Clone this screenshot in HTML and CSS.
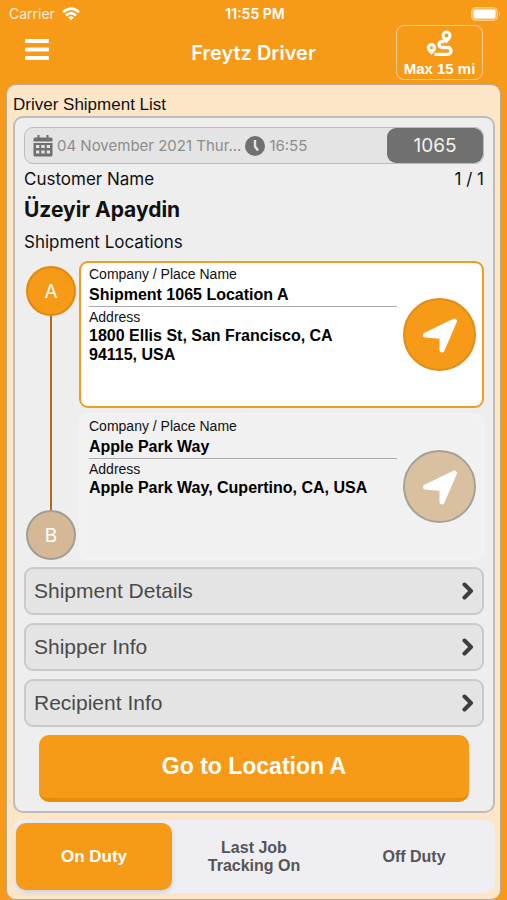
FILE: index.html
```html
<!DOCTYPE html>
<html lang="en">
<head>
<meta charset="utf-8">
<meta name="viewport" content="width=device-width, initial-scale=1">
<title>Freytz Driver</title>
<link rel="stylesheet" href="styles.css">
</head>
<body>
<div class="status-bar">
  <div class="carrier">
    <span>Carrier</span>
    <svg width="18" height="14" viewBox="0 0 18 14" aria-hidden="true"><g fill="none" stroke="#fff" stroke-width="2.6"><path d="M1 5.2Q9-2 17 5.2"/><path d="M4 8.5Q9 3.9 14 8.500"/></g><path d="M6.2 10.5Q9 8 11.8 10.5L9 13.5Z" fill="#fff"/></svg>
  </div>
  <span class="clock">11:55 PM</span>
  <svg class="battery" width="30" height="14" viewBox="0 0 30 14" aria-hidden="true"><rect x=".5" y=".5" width="26" height="13" rx="4" fill="#f9b95c" stroke="#fbcb85"/><rect x="2.5" y="2.5" width="22" height="9" rx="2" fill="#fff"/><path d="M28 4.5Q30 7 28 9.5Z" fill="#fbcb85"/></svg>
</div>

<header class="header">
  <button class="menu" aria-label="Menu"><svg width="24" height="22" viewBox="0 0 24 22"><g fill="#fff"><rect width="24" height="4" rx="1"/><rect y="8.5" width="24" height="4" rx="1"/><rect y="17" width="24" height="4" rx="1"/></g></svg></button>
  <h1 class="title">Freytz Driver</h1>
  <button class="range">
    <svg width="28" height="28" viewBox="0 0 28 28" aria-hidden="true"><path d="M18.500 11.500H16a3 3 0 0 0 0 6h5.700a3.400 3.400 0 0 1 0 6.800H8.500" fill="none" stroke="#fff" stroke-width="3.300"/><path fill="#fff" fill-rule="evenodd" d="M20.500 0.500a5 5 0 0 1 5 5c0 3-3 5.500-5 8-2-2.500-5-5-5-8a5 5 0 0 1 5-5zm0 3.100a1.900 1.900 0 1 0 0 3.800 1.900 1.900 0 0 0 0-3.800zM5.500 13a4.800 4.800 0 0 1 4.800 4.800c0 2.800-3 5-4.800 7.200-1.800-2.200-4.800-4.400-4.800-7.200A4.800 4.800 0 0 1 5.500 13zm0 3.200a1.500 1.500 0 1 0 0 3 1.500 1.500 0 0 0 0-3z"/></svg>
    <span>Max 15 mi</span>
  </button>
</header>

<main class="panel">
  <h2 class="panel-title">Driver Shipment List</h2>

  <section class="shipment">
    <div class="date-bar">
      <svg class="calendar" width="20" height="22" viewBox="0 0 20 22" aria-hidden="true"><path fill="#707070" fill-rule="evenodd" d="M4.500 0h2v2.500h7V0h2v2.500H18a1.500 1.500 0 0 1 1.500 1.500v2.500H.5V4A1.500 1.500 0 0 1 2 2.500h2.500zM.5 8h19v12a1.500 1.500 0 0 1-1.500 1.500H2A1.500 1.500 0 0 1 .5 20zM3 10v3h3.300v-3zm5.300 0v3h3.400v-3zm5.400 0v3H17v-3zM3 15.500v3h3.300v-3zm5.300 0v3h3.400v-3zm5.400 0v3H17v-3z"/></svg>
      <span class="date">04 November 2021 Thur...</span>
      <svg width="20" height="20" viewBox="0 0 20 20" aria-hidden="true"><circle cx="10" cy="10" r="10" fill="#707070"/><path d="M10 4v6.500l3 4" fill="none" stroke="#e4e4e4" stroke-width="2.400"/></svg>
      <span class="time">16:55</span>
      <span class="number">1065</span>
    </div>

    <div class="customer-row"><span>Customer Name</span><span>1 / 1</span></div>
    <h3 class="customer">Üzeyir Apaydin</h3>
    <div class="locations-title">Shipment Locations</div>

    <div class="route">
      <div class="track">
        <span class="stop stop-active">A</span>
        <span class="line"></span>
        <span class="stop">B</span>
      </div>
      <div class="places">
        <article class="place place-active">
          <div class="place-text">
            <div class="label">Company / Place Name</div>
            <div class="value company">Shipment 1065 Location A</div>
            <div class="label">Address</div>
            <div class="value">1800 Ellis St, San Francisco, CA<br>94115, USA</div>
          </div>
          <button class="navigate" aria-label="Navigate to location A"><svg width="36" height="36" viewBox="0 0 36 36"><path d="M3.500 18L32.500 4L20 33V19.500Z" fill="#fff" stroke="#fff" stroke-width="5" stroke-linejoin="round"/></svg></button>
        </article>
        <article class="place">
          <div class="place-text">
            <div class="label">Company / Place Name</div>
            <div class="value company">Apple Park Way</div>
            <div class="label">Address</div>
            <div class="value">Apple Park Way, Cupertino, CA, USA</div>
          </div>
          <button class="navigate" aria-label="Navigate to location B"><svg width="36" height="36" viewBox="0 0 36 36"><path d="M3.500 18L32.500 4L20 33V19.500Z" fill="#fff" stroke="#fff" stroke-width="5" stroke-linejoin="round"/></svg></button>
        </article>
      </div>
    </div>

    <div class="sections">
      <button class="section">Shipment Details<svg width="12" height="18" viewBox="0 0 12 18" aria-hidden="true"><path d="M2.500 2.500L9 9l-6.500 6.500"/></svg></button>
      <button class="section">Shipper Info<svg width="12" height="18" viewBox="0 0 12 18" aria-hidden="true"><path d="M2.500 2.500L9 9l-6.500 6.500"/></svg></button>
      <button class="section">Recipient Info<svg width="12" height="18" viewBox="0 0 12 18" aria-hidden="true"><path d="M2.500 2.500L9 9l-6.500 6.500"/></svg></button>
    </div>

    <button class="go">Go to Location A</button>
  </section>

  <div class="duty" role="group" aria-label="Duty status">
    <button class="duty-option duty-selected" aria-pressed="true">On Duty</button>
    <button class="duty-option" aria-pressed="false">Last Job<br>Tracking On</button>
    <button class="duty-option" aria-pressed="false">Off Duty</button>
  </div>
</main>
</body>
</html>
```
FILE: styles.css
```css
* {
  box-sizing: border-box;
}

:root {
  --orange: #f69a17;
  --system: Inter, sans-serif;
  --text: "Liberation Sans", Arial, sans-serif;
}

body {
  margin: 0;
  padding-bottom: 1px;
  background: var(--orange);
  color: #111;
  font-family: var(--text);
}

h1, h2, h3 {
  margin: 0;
}

button {
  margin: 0;
  padding: 0;
  border: 0;
  background: none;
  color: inherit;
  font-family: inherit;
}

svg {
  display: block;
  flex: none;
}

.status-bar {
  display: grid;
  grid-template-columns: 1fr auto 1fr;
  align-items: center;
  height: 25px;
  padding: 2px 6px 0 9px;
  color: #fff;
  font-family: var(--system);
  font-size: 14px;
}

.carrier {
  display: flex;
  align-items: center;
  gap: 7px;
  color: #fff1dc;
}

.clock {
  font-weight: 600;
}

.battery {
  justify-self: end;
}

.header {
  display: grid;
  grid-template-columns: 1fr auto 1fr;
  align-items: center;
  height: 59px;
  padding: 0 24px 4px;
  color: #fff;
}

.menu {
  justify-self: start;
  padding: 0 1px 6px;
}

.title {
  font-family: var(--system);
  font-size: 20px;
  font-weight: 600;
  line-height: 24px;
}

.range {
  display: flex;
  flex-direction: column;
  align-items: center;
  justify-self: end;
  width: 87px;
  height: 55px;
  padding-top: 4px;
  border: 1px solid #fcce8c;
  border-radius: 8px;
  font-size: 15px;
  font-weight: 700;
  line-height: 22px;
}

.panel {
  margin: 0 6px;
  padding: 9px 5px 6px 6px;
  border: 1px solid #b9a98f;
  border-radius: 10px;
  background: #fde6c8;
}

.panel-title {
  font-size: 17px;
  font-weight: 400;
  line-height: 22px;
}

.shipment {
  padding: 9px;
  border: 2px solid #bdbcba;
  border-radius: 10px;
  background: #eee;
}

.date-bar {
  display: flex;
  align-items: center;
  gap: 4px;
  height: 37px;
  padding-left: 8px;
  border: 1px solid #bdbdbd;
  border-radius: 9px;
  background: #e4e4e4;
  color: #8d8d8d;
  font-family: var(--system);
  font-size: 15px;
}

.number {
  align-self: stretch;
  width: 96px;
  margin-left: auto;
  border-radius: 9px;
  background: #707070;
  color: #f2f2f2;
  font-size: 19px;
  line-height: 35px;
  text-align: center;
}

.customer-row,
.locations-title {
  font-family: var(--system);
  font-size: 17px;
  line-height: 30px;
}

.customer-row {
  display: flex;
  justify-content: space-between;
}

.customer {
  font-family: var(--system);
  font-size: 21px;
  font-weight: 700;
  line-height: 32px;
}

.locations-title {
  line-height: 32px;
}

.route {
  display: flex;
  gap: 3px;
  padding: 3px 0 7px;
}

.track {
  display: flex;
  flex-direction: column;
  align-items: center;
  padding: 5px 0 0 2px;
}

.stop {
  width: 50px;
  height: 50px;
  border: 2px solid #a39d97;
  border-radius: 50%;
  background: #d5b996;
  color: #fff;
  font-family: var(--system);
  font-size: 19px;
  line-height: 48px;
  text-align: center;
}

.stop-active {
  border-color: #e4890f;
  background: var(--orange);
}

.line {
  flex: 1;
  width: 2px;
  background: #b06a15;
}

.places {
  display: grid;
  flex: 1;
  gap: 5px;
}

.place {
  display: flex;
  gap: 6px;
  align-items: center;
  min-height: 147px;
  padding: 2px 6px 2px 8px;
  border: 2px solid #f3f3f3;
  border-radius: 9px;
  background: #f1f1f1;
}

.place-active {
  border-color: #ee9c24;
  background: #fff;
}

.place-text {
  flex: 1;
  align-self: flex-start;
}

.label {
  font-size: 14px;
  line-height: 18px;
}

.value {
  color: #000;
  font-size: 16px;
  font-weight: 700;
  line-height: 19px;
}

.company {
  margin-bottom: 1px;
  padding: 2px 0;
  border-bottom: 1px solid #aaa;
}

.navigate {
  display: grid;
  place-items: center;
  flex: none;
  width: 73px;
  height: 73px;
  border: 2px solid #a5a098;
  border-radius: 50%;
  background: #d8c0a0;
}

.place-active .navigate {
  border-color: #df8c19;
  background: var(--orange);
}

.sections {
  display: grid;
  gap: 8px;
}

.section {
  display: flex;
  align-items: center;
  justify-content: space-between;
  height: 48px;
  padding: 0 8px;
  border: 2px solid #c9cacb;
  border-radius: 9px;
  background: #e4e4e4;
  color: #4a4a4a;
  font-size: 21px;
}

.section path {
  fill: none;
  stroke: #3d3d3d;
  stroke-width: 4;
  stroke-linecap: round;
  stroke-linejoin: round;
}

.go {
  display: block;
  width: calc(100% - 30px);
  height: 67px;
  margin: 8px 15px 0;
  border-bottom: 4px solid #e98c0b;
  border-radius: 10px;
  background: var(--orange);
  color: #fff;
  font-size: 23px;
  font-weight: 700;
}

.duty {
  display: grid;
  grid-template-columns: repeat(3, 1fr);
  gap: 4px;
  height: 73px;
  margin-top: 7px;
  padding: 3px;
  border-radius: 10px;
  background: #efeef3;
}

.duty-option {
  border-radius: 10px;
  color: #555;
  font-size: 16px;
  font-weight: 700;
  line-height: 18px;
}

.duty-selected {
  background: var(--orange);
  box-shadow: 0 2px 5px rgba(0, 0, 0, 0.15);
  color: #fff;
  font-size: 17px;
}
```
